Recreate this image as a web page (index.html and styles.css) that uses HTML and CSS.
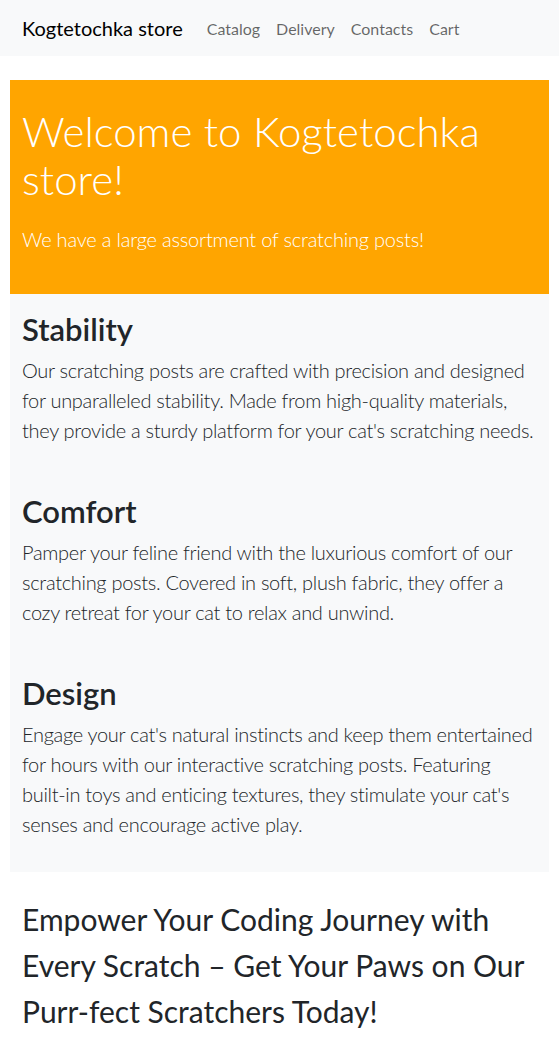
FILE: index.html
```html
<!DOCTYPE html>
<html lang="en">
<head>
<meta charset="utf-8">
<title>Kogtetochka store</title>
<link rel="stylesheet" href="styles.css">
</head>
<body>
<nav class="navbar">
  <a class="brand" href="#">Kogtetochka store</a>
  <ul class="nav">
    <li><a href="#">Catalog</a></li>
    <li><a href="#">Delivery</a></li>
    <li><a href="#">Contacts</a></li>
    <li><a href="#">Cart</a></li>
  </ul>
</nav>
<main class="container">
  <section class="hero">
    <h1>Welcome to Kogtetochka store!</h1>
    <p class="lead">We have a large assortment of scratching posts!</p>
  </section>
  <section class="features">
    <div class="feature">
      <h2>Stability</h2>
      <p>Our scratching posts are crafted with precision and designed for unparalleled stability. Made from high-quality materials, they provide a sturdy platform for your cat's scratching needs.</p>
    </div>
    <div class="feature">
      <h2>Comfort</h2>
      <p>Pamper your feline friend with the luxurious comfort of our scratching posts. Covered in soft, plush fabric, they offer a cozy retreat for your cat to relax and unwind.</p>
    </div>
    <div class="feature">
      <h2>Design</h2>
      <p>Engage your cat's natural instincts and keep them entertained for hours with our interactive scratching posts. Featuring built-in toys and enticing textures, they stimulate your cat's senses and encourage active play.</p>
    </div>
  </section>
  <p class="tagline">Empower Your Coding Journey with Every Scratch – Get Your Paws on Our Purr-fect Scratchers Today!</p>
</main>
</body>
</html>
```
FILE: styles.css
```css
* { box-sizing: border-box; }
body {
  margin: 0;
  font-family: Lato, "Open Sans", sans-serif;
  color: #212529;
  background: #fff;
}
a { text-decoration: none; }
.navbar {
  display: flex;
  align-items: center;
  height: 56px;
  padding: 0 22px;
  background: #f8f9fa;
}
.brand {
  font-size: 20px;
  color: #000;
  margin-right: 16px;
}
.nav {
  display: flex;
  list-style: none;
  margin: 0;
  padding: 0;
}
.nav a {
  display: block;
  padding: 8px 8px;
  font-size: 16px;
  color: rgba(0,0,0,.6);
}
.container {
  padding: 24px 10px 0;
}
.hero {
  background: #ffa500;
  color: #fff;
  padding: 27px 12px 24px;
}
.hero h1 {
  margin: 0 0 21px;
  font-size: 42px;
  font-weight: 300;
  line-height: 48px;
}
.lead {
  margin: 0 0 16px;
  font-size: 20px;
  font-weight: 300;
  line-height: 30px;
  letter-spacing: -0.2px;
}
.features {
  background: #f8f9fa;
  padding: 17px 12px 33px;
  display: flex;
  flex-direction: column;
  gap: 48px;
}
.feature h2 {
  margin: 0 0 8px;
  font-size: 31px;
  font-weight: 600;
  line-height: 36px;
}
.feature p {
  margin: 0;
  font-size: 20px;
  font-weight: 300;
  line-height: 30px;
  letter-spacing: -0.3px;
}
.tagline {
  margin: 24px 0 0;
  padding: 0 12px;
  font-size: 30px;
  font-weight: 400;
  line-height: 46px;
}
```
